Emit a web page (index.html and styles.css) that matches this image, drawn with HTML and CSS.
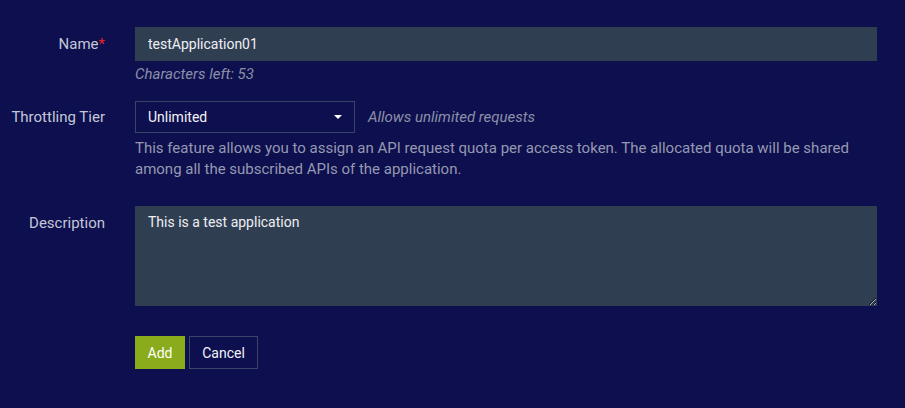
FILE: index.html
```html
<!DOCTYPE html>
<html>
<head>
<meta charset="utf-8">
<link rel="stylesheet" href="styles.css">
</head>
<body>
<form class="form">
  <div class="row row-name">
    <label class="label">Name<span class="req">*</span></label>
    <div class="field">
      <input class="input" type="text" value="testApplication01">
      <div class="hint">Characters left: 53</div>
    </div>
  </div>
  <div class="row row-tier">
    <label class="label">Throttling Tier</label>
    <div class="field">
      <div class="select-line">
        <div class="select"><span>Unlimited</span><span class="caret"></span></div>
        <span class="hint inline">Allows unlimited requests</span>
      </div>
      <p class="desc">This feature allows you to assign an API request quota per access token. The allocated quota will be shared among all the subscribed APIs of the application.</p>
    </div>
  </div>
  <div class="row row-desc">
    <label class="label">Description</label>
    <div class="field">
      <textarea class="textarea">This is a test application</textarea>
    </div>
  </div>
  <div class="row row-actions">
    <div></div>
    <div class="field actions">
      <button type="button" class="btn btn-add">Add</button>
      <button type="button" class="btn btn-cancel">Cancel</button>
    </div>
  </div>
</form>
</body>
</html>
```
FILE: styles.css
```css
html, body {
  margin: 0;
  padding: 0;
  background: #0e0f4e;
  font-family: Roboto, "Liberation Sans", sans-serif;
  font-size: 15px;
  color: #c5c9da;
}
.form {
  padding: 27px 28px 0 0;
}
.row {
  display: grid;
  grid-template-columns: 105px 1fr;
  column-gap: 30px;
}
.label {
  text-align: right;
  color: #c3c7d8;
  line-height: 20px;
}
.req { color: #e02525; }
.row-name .label { padding-top: 7px; }
.row-tier { margin-top: 17px; }
.row-tier .label { padding-top: 6px; }
.row-desc { margin-top: 26px; }
.row-desc .label { padding-top: 7px; }
.row-actions { margin-top: 30px; }

.input {
  display: block;
  box-sizing: border-box;
  width: 100%;
  height: 34px;
  margin: 0;
  border: 0;
  background: #303e52;
  color: #eeeff3;
  font: inherit;
  font-size: 14px;
  padding: 0 12px 0 13px;
  outline: none;
}
.hint {
  color: #8b90a9;
  font-style: italic;
  line-height: 20px;
  margin-top: 3px;
}
.hint.inline { margin: 0 0 0 13px; }
.select-line {
  display: flex;
  align-items: center;
}
.select {
  box-sizing: border-box;
  width: 220px;
  height: 32px;
  border: 1px solid #3a4466;
  display: flex;
  align-items: center;
  justify-content: space-between;
  padding: 0 12px 0 12px;
  color: #f2f3f7;
  font-size: 14px;
}
.caret {
  width: 0;
  height: 0;
  border-top: 4px solid #ffffff;
  border-left: 4px solid transparent;
  border-right: 4px solid transparent;
}
.desc {
  margin: 5px 0 0 0;
  line-height: 21px;
  color: #9599b1;
}
.textarea {
  display: block;
  box-sizing: border-box;
  width: 100%;
  height: 100px;
  margin: 0;
  border: 0;
  background: #303e52;
  color: #eeeff3;
  font: inherit;
  font-size: 14px;
  line-height: 20px;
  padding: 6px 12px 0 13px;
  outline: none;
  resize: both;
}
.actions {
  display: flex;
  gap: 4px;
}
.btn {
  height: 33px;
  font: inherit;
  font-size: 14px;
  margin: 0;
  cursor: pointer;
  box-sizing: border-box;
}
.btn-add {
  width: 50px;
  border: 0;
  background: #89ab1c;
  color: #ffffff;
}
.btn-cancel {
  width: 69px;
  border: 1px solid #3a4466;
  background: transparent;
  color: #f2f3f7;
}
```
